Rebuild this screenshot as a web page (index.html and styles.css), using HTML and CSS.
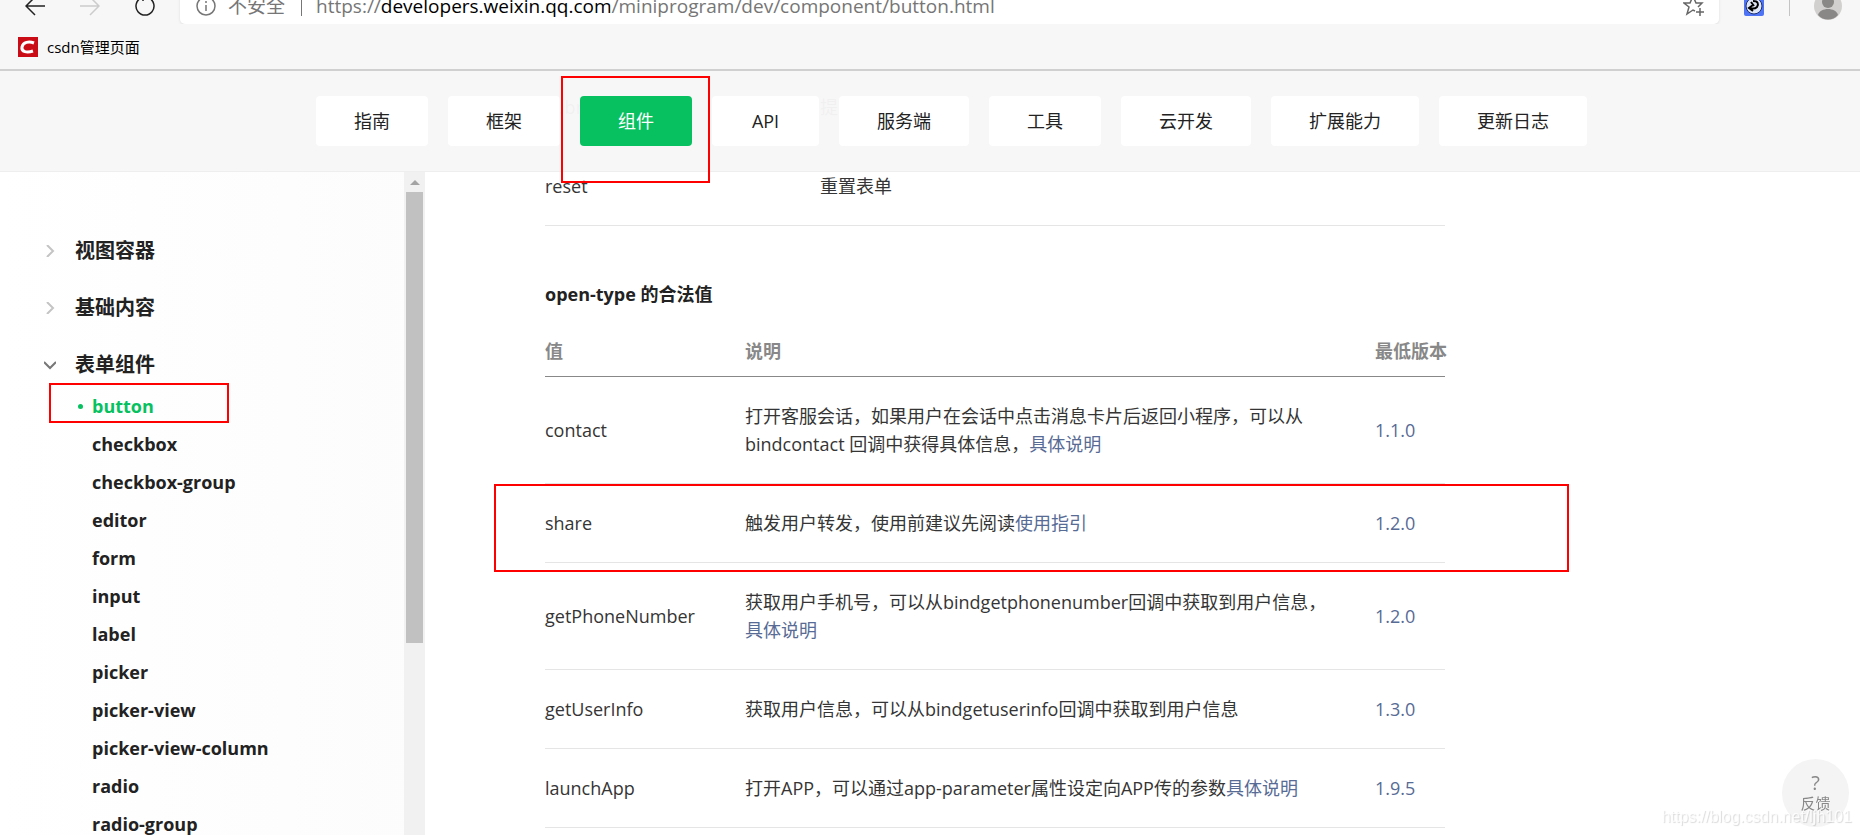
FILE: index.html
```html
<!DOCTYPE html>
<html lang="zh-CN">
<head>
  <meta charset="UTF-8" />
  <title>button | 微信开放文档</title>
  <link rel="stylesheet" href="styles.css">
</head>
<body>

  <!-- Browser toolbar -->
  <div class="toolbar">
    <button class="tool" aria-label="后退">
      <svg width="20" height="20" viewBox="0 0 20 20"><path d="M20 10H1M10 1L1 10l9 9" /></svg>
    </button>
    <button class="tool disabled" aria-label="前进">
      <svg width="20" height="20" viewBox="0 0 20 20"><path d="M0 10h19M10 1l9 9-9 9" /></svg>
    </button>
    <button class="tool reload" aria-label="刷新">
      <svg width="20" height="20" viewBox="0 0 20 20"><path d="M14 2a9 9 0 1 1-8 0M8 0v5" /></svg>
    </button>
    <div class="address">
      <svg class="info" width="20" height="20" viewBox="0 0 20 20"><circle cx="10" cy="10" r="9" /><path d="M10 9v6M10 5v2" /></svg>
      <span class="insecure">不安全</span>
      <span class="divider"></span>
      <div class="url" role="textbox" aria-label="地址">https://<b>developers.weixin.qq.com</b>/miniprogram/dev/component/button.html</div>
      <button class="tool star" aria-label="收藏">
        <svg width="22" height="22" viewBox="0 0 22 22"><path d="M12 16l-2-1-6 4 2-7-5-4h6l3-7 3 7h6l-4 4M17 13v8M13 17h8" /></svg>
      </button>
    </div>
    <svg class="extension" width="20" height="20" viewBox="0 0 20 20">
      <rect width="20" height="20" rx="2" fill="#4f73f5" />
      <circle cx="10" cy="10" r="8" fill="#dfe6f5" stroke="#1d3170" stroke-width="1" />
      <path d="M7 6l3 4M9 5c5 0 6 3 4 6-2 2-4 2-7 1M9 9l-4 3 4 3" fill="none" stroke="#000" stroke-width="2" />
    </svg>
    <span class="divider"></span>
    <svg class="avatar" width="28" height="28" viewBox="0 0 28 28">
      <circle cx="14" cy="14" r="14" fill="#d2d0ce" />
      <circle cx="14" cy="10" r="6" fill="#8a8886" />
      <path d="M4 23c2-8 18-8 20 0-5 6-15 6-20 0z" fill="#8a8886" />
    </svg>
  </div>

  <div class="bookmarks">
    <a href="#" class="bookmark">
      <svg width="20" height="20" viewBox="0 0 20 20"><rect width="20" height="20" fill="#ca0c16" /><path d="M16 6C11 4 5 5 4 10s5 6 11 4" fill="none" stroke="#fff" stroke-width="3" /></svg>
      csdn管理页面
    </a>
  </div>

  <div class="docs">
    <!-- Top navigation -->
    <nav class="topnav">
      <a href="#">指南</a>
      <a href="#">框架</a>
      <a href="#" class="active">组件<span class="mark mark-nav"></span></a>
      <a href="#">API</a>
      <a href="#">服务端</a>
      <a href="#">工具</a>
      <a href="#">云开发</a>
      <a href="#">扩展能力</a>
      <a href="#">更新日志</a>
    </nav>

    <!-- Sidebar -->
    <aside class="sidebar">
      <div class="menu">
        <a href="#" class="group"><svg width="12" height="12" viewBox="0 0 12 12"><path d="M3 0l6 6-6 6" /></svg>视图容器</a>
        <a href="#" class="group"><svg width="12" height="12" viewBox="0 0 12 12"><path d="M3 0l6 6-6 6" /></svg>基础内容</a>
        <a href="#" class="group open"><svg width="12" height="12" viewBox="0 0 12 12"><path d="M0 3l6 6 6-6" /></svg>表单组件</a>
        <ul class="submenu">
          <li class="current"><a href="#">button</a><span class="mark mark-menu"></span></li>
          <li><a href="#">checkbox</a></li>
          <li><a href="#">checkbox-group</a></li>
          <li><a href="#">editor</a></li>
          <li><a href="#">form</a></li>
          <li><a href="#">input</a></li>
          <li><a href="#">label</a></li>
          <li><a href="#">picker</a></li>
          <li><a href="#">picker-view</a></li>
          <li><a href="#">picker-view-column</a></li>
          <li><a href="#">radio</a></li>
          <li><a href="#">radio-group</a></li>
        </ul>
      </div>
      <div class="scrollbar">
        <svg width="10" height="5" viewBox="0 0 10 5"><path d="M0 5l5-5 5 5z" fill="#a3a3a3" /></svg>
        <div class="thumb"></div>
      </div>
    </aside>

    <!-- Content, scrolls under the top navigation -->
    <main class="content">
      <table class="form-types">
        <tr><td>submit</td><td>提交表单</td></tr>
        <tr><td>reset</td><td>重置表单</td></tr>
      </table>

      <h4>open-type 的合法值</h4>
      <table class="open-types">
        <thead>
          <tr><th>值</th><th>说明</th><th>最低版本</th></tr>
        </thead>
        <tbody>
          <tr>
            <td>contact</td>
            <td>打开客服会话，如果用户在会话中点击消息卡片后返回小程序，可以从<br>bindcontact 回调中获得具体信息，<a href="#">具体说明</a></td>
            <td><a href="#">1.1.0</a></td>
          </tr>
          <tr>
            <td class="marked">share<span class="mark mark-row"></span></td>
            <td>触发用户转发，使用前建议先阅读<a href="#">使用指引</a></td>
            <td><a href="#">1.2.0</a></td>
          </tr>
          <tr>
            <td>getPhoneNumber</td>
            <td>获取用户手机号，可以从bindgetphonenumber回调中获取到用户信息，<br><a href="#">具体说明</a></td>
            <td><a href="#">1.2.0</a></td>
          </tr>
          <tr>
            <td>getUserInfo</td>
            <td>获取用户信息，可以从bindgetuserinfo回调中获取到用户信息</td>
            <td><a href="#">1.3.0</a></td>
          </tr>
          <tr>
            <td>launchApp</td>
            <td>打开APP，可以通过app-parameter属性设定向APP传的参数<a href="#">具体说明</a></td>
            <td><a href="#">1.9.5</a></td>
          </tr>
        </tbody>
      </table>
    </main>
  </div>

  <button class="feedback"><span class="question">?</span>反馈</button>
  <div class="watermark">https://blog.csdn.net/ljh101</div>

</body>
</html>
```
FILE: styles.css
```css
* {
  box-sizing: border-box;
}
body {
  margin: 0;
  height: 100vh;
  display: flex;
  flex-direction: column;
  overflow: hidden;
  background: #fff;
  color: #353535;
  font-family: "Open Sans", "Noto Sans CJK SC", sans-serif;
  font-size: 18px;
  line-height: 28px;
}
a {
  color: #576b95;
  text-decoration: none;
}
button {
  font-family: inherit;
  border: none;
  padding: 0;
  cursor: pointer;
}

/* Browser toolbar */
.toolbar {
  display: flex;
  align-items: center;
  flex: none;
  height: 36px;
  margin-top: -12px;
  padding: 0 18px 0 25px;
  background: #f7f7f7;
}
.tool {
  display: flex;
  background: none;
  margin-right: 35px;
}
.tool svg,
.info {
  fill: none;
  stroke: #222;
  stroke-width: 1.5;
}
.tool.disabled svg {
  stroke: #ccc;
}
.tool.reload {
  margin-right: 25px;
}
.address {
  flex: 1;
  display: flex;
  align-items: center;
  height: 36px;
  padding: 0 14px 0 16px;
  background: #fff;
  border-radius: 5px;
  box-shadow: 0 1px 3px rgba(0,0,0,0.1);
  color: #767676;
  font-size: 19px;
}
.info {
  stroke: #767676;
}
.insecure {
  margin-left: 12px;
}
.divider {
  width: 1px;
  height: 19px;
  background: #c4c4c4;
}
.address .divider {
  margin: 0 14px 0 16px;
  background: #767676;
}
.url {
  flex: 1;
}
.url b {
  font-weight: normal;
  color: #000;
}
.tool.star {
  margin: 0;
}
.tool.star svg {
  stroke: #666;
}
.extension {
  margin: 0 25px;
}
.avatar {
  margin-left: 24px;
}
.bookmarks {
  flex: none;
  height: 47px;
  padding-left: 18px;
  display: flex;
  align-items: center;
  background: #f7f7f7;
  border-bottom: 2px solid #d0d0d0;
}
.bookmark {
  display: flex;
  align-items: center;
  gap: 9px;
  color: #000;
  font-size: 15px;
}

/* Page layout */
.docs {
  flex: 1;
  min-height: 0;
  display: grid;
  grid-template-columns: 425px 1fr;
  grid-template-rows: 101px 1fr;
}
.topnav {
  grid-column: 1 / 3;
  grid-row: 1;
  z-index: 2;
  display: flex;
  gap: 20px;
  padding: 25px 0 0 316px;
  background: rgba(247,247,247,0.97);
  border-bottom: 1px solid #eee;
}
.topnav a {
  position: relative;
  min-width: 107px;
  height: 50px;
  padding: 0 38px;
  line-height: 50px;
  text-align: center;
  white-space: nowrap;
  color: #222;
  background: #fff;
  border-radius: 4px;
}
.topnav a.active {
  background: #07c160;
  color: #fff;
}

/* Red frames */
.mark {
  position: absolute;
  border: 2px solid #f00;
  pointer-events: none;
}
.mark-nav {
  left: -19px;
  top: -20px;
  width: 149px;
  height: 107px;
}
.mark-menu {
  left: 49px;
  top: -4px;
  width: 180px;
  height: 40px;
}
.mark-row {
  left: -51px;
  top: 0;
  width: 1075px;
  height: 88px;
}

/* Sidebar */
.sidebar {
  grid-column: 1;
  grid-row: 2;
  display: flex;
  min-height: 0;
  background: linear-gradient(to right, #fff, #fcfcfc);
}
.menu {
  flex: 1;
  padding-top: 65px;
  overflow: hidden;
}
.group {
  display: flex;
  align-items: center;
  gap: 19px;
  height: 27px;
  margin-bottom: 30px;
  padding-left: 44px;
  font-size: 20px;
  font-weight: bold;
  color: #222;
}
.group.open {
  margin-bottom: 9px;
}
.group svg {
  fill: none;
  stroke: #c4c4c4;
  stroke-width: 2;
}
.group.open svg {
  stroke: #777;
}
.submenu {
  list-style: none;
  margin: 0;
  padding: 0;
}
.submenu li {
  position: relative;
  padding-left: 92px;
  line-height: 38px;
  font-weight: bold;
}
.submenu a {
  color: #222;
}
.submenu .current {
  display: flex;
  align-items: center;
  gap: 9px;
  padding-left: 78px;
}
.submenu .current::before {
  content: "";
  width: 5px;
  height: 5px;
  border-radius: 50%;
  background: #07c160;
}
.submenu .current a {
  color: #07c160;
}
.scrollbar {
  width: 21px;
  padding: 0 2px;
  background: #f1f1f1;
}
.scrollbar svg {
  display: block;
  margin: 8px auto 7px;
}
.thumb {
  height: 68%;
  background: #c1c1c1;
}

/* Content */
.content {
  grid-column: 2;
  grid-row: 1 / 3;
  min-height: 0;
  overflow: hidden;
  padding: 0 20px 0 120px;
}
table {
  width: 100%;
  max-width: 900px;
  border-collapse: separate;
  border-spacing: 0;
  table-layout: fixed;
}
th, td {
  padding: 25px 0;
  border-bottom: 1px solid #e5e5e5;
  text-align: left;
  white-space: nowrap;
}
.form-types {
  margin-top: -3px;
}
.form-types td:first-child {
  width: 275px;
}
h4 {
  margin: 54px 0 14px;
  font-size: 18px;
  font-weight: bold;
  color: #222;
}
.open-types th {
  padding: 15px 0 11px;
  color: #888;
  border-bottom-color: #888;
}
.open-types th:first-child {
  width: 200px;
}
.open-types th:last-child {
  width: 70px;
}
.marked {
  position: relative;
}

/* Feedback button and watermark */
.feedback {
  position: fixed;
  right: 11px;
  bottom: 8px;
  width: 67px;
  height: 68px;
  border-radius: 50%;
  background: #f4f4f4;
  color: #888;
  font-size: 15px;
  line-height: 20px;
}
.question {
  display: block;
  font-size: 20px;
}
.watermark {
  position: fixed;
  right: 8px;
  bottom: 4px;
  font-family: "Liberation Sans", Arial, sans-serif;
  font-size: 16px;
  color: rgba(255,255,255,0.8);
  text-shadow: 1px 1px 1px rgba(0,0,0,0.15);
}
```
